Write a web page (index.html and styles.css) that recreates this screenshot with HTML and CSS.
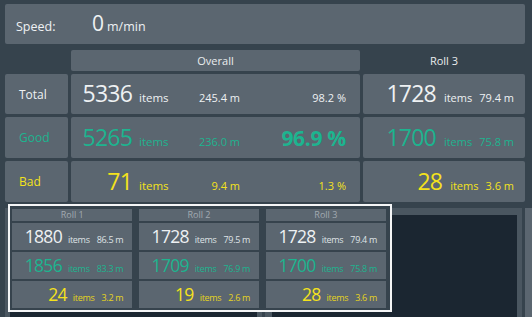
FILE: index.html
```html
<!DOCTYPE html>
<html>
<head>
<meta charset="utf-8">
<link rel="stylesheet" href="styles.css">
</head>
<body>
<div class="page">
  <div class="card speed">
    <span class="speed-label">Speed:</span><span class="speed-val">0</span><span class="speed-unit">m/min</span>
  </div>

  <div class="table">
    <div class="blank"></div>
    <div class="card head">Overall</div>
    <div class="head">Roll 3</div>

    <div class="card label">Total</div>
    <div class="card overall">
      <span class="num">5336</span><span class="items">items</span><span class="dist">245.4 m</span><span class="pct">98.2 %</span>
    </div>
    <div class="card roll">
      <span class="num">1728</span><span class="items">items</span><span class="dist">79.4 m</span>
    </div>

    <div class="card label good">Good</div>
    <div class="card overall good">
      <span class="num">5265</span><span class="items">items</span><span class="dist">236.0 m</span><span class="pct big">96.9 %</span>
    </div>
    <div class="card roll good">
      <span class="num">1700</span><span class="items">items</span><span class="dist">75.8 m</span>
    </div>

    <div class="card label bad">Bad</div>
    <div class="card overall bad">
      <span class="num">71</span><span class="items">items</span><span class="dist">9.4 m</span><span class="pct">1.3 %</span>
    </div>
    <div class="card roll bad">
      <span class="num">28</span><span class="items">items</span><span class="dist">3.6 m</span>
    </div>
  </div>

  <div class="bottom">
    <div class="chart chart-left"><div class="chart-inner"></div></div>
    <div class="chart chart-right"><div class="chart-inner"></div></div>
    <div class="chart chart-more"></div>
  </div>

  <div class="popup">
    <div class="p-head">Roll 1</div>
    <div class="p-head">Roll 2</div>
    <div class="p-head">Roll 3</div>

    <div class="p-cell"><span class="num">1880</span><span class="items">items</span><span class="dist">86.5 m</span></div>
    <div class="p-cell"><span class="num">1728</span><span class="items">items</span><span class="dist">79.5 m</span></div>
    <div class="p-cell"><span class="num">1728</span><span class="items">items</span><span class="dist">79.4 m</span></div>

    <div class="p-cell good"><span class="num">1856</span><span class="items">items</span><span class="dist">83.3 m</span></div>
    <div class="p-cell good"><span class="num">1709</span><span class="items">items</span><span class="dist">76.9 m</span></div>
    <div class="p-cell good"><span class="num">1700</span><span class="items">items</span><span class="dist">75.8 m</span></div>

    <div class="p-cell bad"><span class="num">24</span><span class="items">items</span><span class="dist">3.2 m</span></div>
    <div class="p-cell bad"><span class="num">19</span><span class="items">items</span><span class="dist">2.6 m</span></div>
    <div class="p-cell bad"><span class="num">28</span><span class="items">items</span><span class="dist">3.6 m</span></div>
  </div>
</div>
</body>
</html>
```
FILE: styles.css
```css
* { box-sizing: border-box; margin: 0; padding: 0; }

html, body {
  width: 532px;
  height: 317px;
  overflow: hidden;
  background: #36434d;
}

body {
  font-family: "Open Sans", "Noto Sans", sans-serif;
  color: #eef1f3;
}

.page {
  position: relative;
  height: 317px;
  padding: 4px 7px 0 5px;
}

.card {
  background: #5b6670;
  border-radius: 2px;
}

/* speed */
.speed {
  height: 40px;
  display: flex;
  flex-wrap: wrap;
  align-items: baseline;
  align-content: center;
  padding-left: 11px;
}
.speed-label {
  width: 76px;
  font-size: 12.5px;
}
.speed-val {
  font-size: 21px;
  line-height: 1.3;
}
.speed-unit {
  margin-left: 3px;
  font-size: 12.5px;
}

/* main table */
.table {
  margin-top: 6px;
  display: grid;
  grid-template-columns: 63px 289px 162px;
  grid-template-rows: 21px 40px 41px 41px;
  gap: 3px;
}

.head {
  display: flex;
  align-items: center;
  justify-content: center;
  font-size: 11px;
  color: #e9ecee;
}

.label {
  display: flex;
  align-items: center;
  padding-left: 14px;
  font-size: 12px;
}

.good { color: #1db48f; }
.bad { color: #f4e21c; }

.num {
  font-size: 23px;
  letter-spacing: -0.8px;
  line-height: 1.3;
}

.overall {
  display: grid;
  grid-template-columns: 61px 37px 71px 1fr;
  align-items: baseline;
  align-content: center;
  padding-right: 14px;
}
.overall .num { text-align: right; }
.overall .items {
  padding-left: 7px;
  font-size: 11.5px;
}
.overall .dist,
.overall .pct {
  text-align: right;
  font-size: 11px;
}
.overall .pct.big {
  font-size: 21px;
  font-weight: 700;
  letter-spacing: -0.3px;
}

.roll {
  display: flex;
  flex-wrap: wrap;
  justify-content: flex-end;
  align-items: baseline;
  align-content: center;
  padding-right: 11px;
}
.roll .items {
  margin-left: 8px;
  font-size: 11px;
}
.roll .dist {
  margin-left: 7px;
  font-size: 11px;
}

/* bottom charts behind the popup */
.bottom {
  display: flex;
  gap: 3px;
  margin-top: 6px;
  margin-right: -20px;
}
.chart {
  height: 120px;
  background: #4a5660;
  padding: 7px 5px 0 7px;
}
.chart-left { width: 258px; padding-left: 5px; }
.chart-right { width: 259px; }
.chart-more { width: 20px; background: #5b6670; padding: 0; }
.chart-inner {
  height: 100%;
  background: #1b2631;
}

/* popup */
.popup {
  position: absolute;
  left: 8px;
  top: 204px;
  width: 384px;
  height: 108px;
  border: 2px solid #f4f5f6;
  background: #36434d;
  padding: 3px 4px 2px 2px;
  display: grid;
  grid-template-columns: repeat(3, 1fr);
  grid-template-rows: 12px 27px 27px 27px;
  gap: 2px 6.5px;
}

.p-head {
  background: #5b6670;
  color: #a2aab0;
  font-size: 9px;
  line-height: 12px;
  text-align: center;
}

.p-cell {
  background: #5b6670;
  display: flex;
  flex-wrap: wrap;
  justify-content: flex-end;
  align-items: baseline;
  align-content: center;
  padding-right: 9px;
  color: #eef1f3;
}
.p-cell .num {
  font-size: 17.5px;
  letter-spacing: -0.7px;
}
.p-cell .items {
  margin-left: 6px;
  font-size: 9px;
  letter-spacing: -0.3px;
  color: #dfe3e6;
}
.p-cell .dist {
  margin-left: 7px;
  font-size: 9px;
  letter-spacing: -0.3px;
  color: #dfe3e6;
}
.p-cell.good,
.p-cell.good .items,
.p-cell.good .dist { color: #1db48f; }
.p-cell.bad { color: #f4e21c; }
.p-cell.bad .items,
.p-cell.bad .dist { color: #e5d41e; }
```
